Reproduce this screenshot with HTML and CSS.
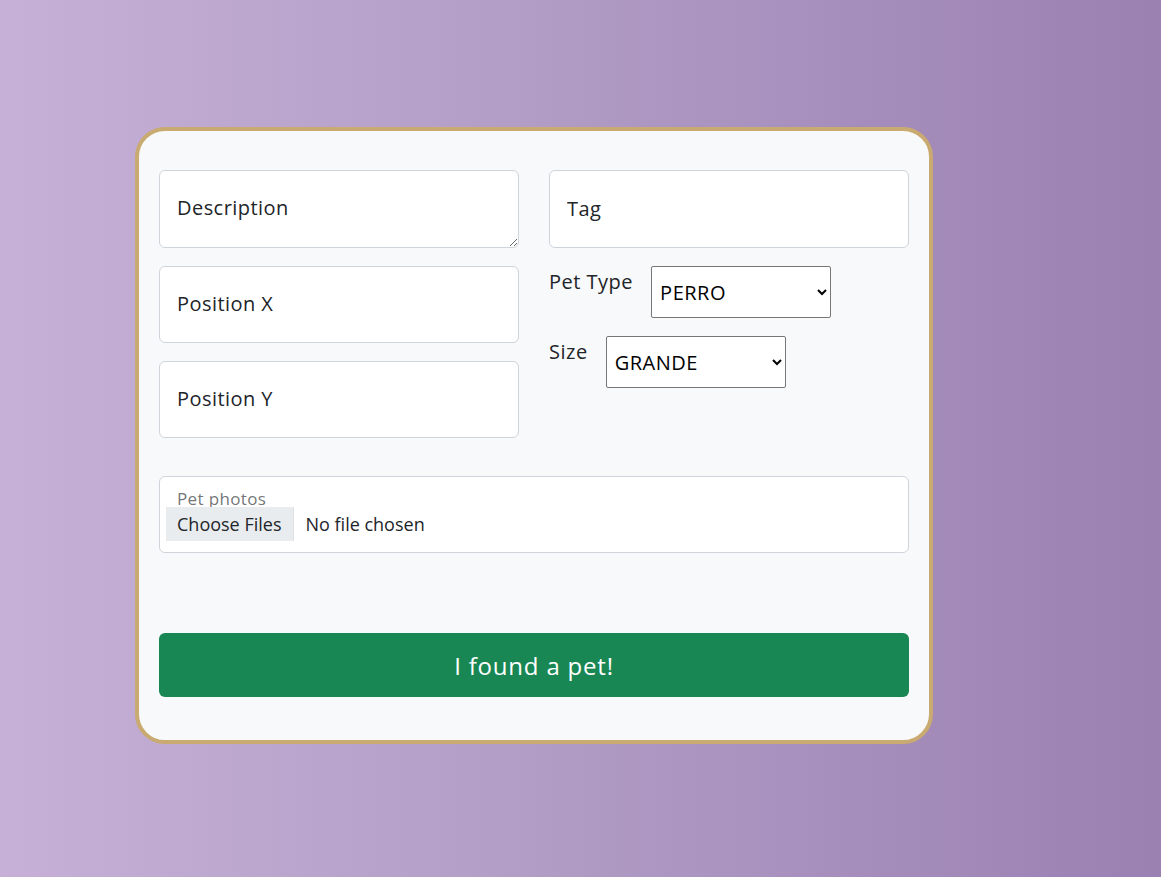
FILE: index.html
```html
<!DOCTYPE html>
<html lang="en">
<head>
<meta charset="utf-8">
<title>Found pet</title>
<link rel="stylesheet" href="styles.css">
</head>
<body>
<main class="page">
  <form class="card">
    <div class="grid">
      <div class="col">
        <textarea class="field field-area" placeholder="Description"></textarea>
        <input class="field" type="text" placeholder="Position X">
        <input class="field" type="text" placeholder="Position Y">
      </div>
      <div class="col">
        <input class="field" type="text" placeholder="Tag">
        <div class="select-row">
          <label class="select-label" for="ptype">Pet Type</label>
          <select id="ptype" class="select"><option>PERRO</option><option>GATO</option></select>
        </div>
        <div class="select-row">
          <label class="select-label" for="psize">Size</label>
          <select id="psize" class="select"><option>GRANDE</option><option>MEDIANO</option><option>PEQUEÑO</option></select>
        </div>
      </div>
    </div>
    <div class="photos">
      <label class="photos-label" for="files">Pet photos</label>
      <div class="file-row">
        <span class="file-btn">Choose Files</span>
        <span class="file-text">No file chosen</span>
      </div>
    </div>
    <button type="button" class="submit">I found a pet!</button>
  </form>
</main>
</body>
</html>
```
FILE: styles.css
```css
* { box-sizing: border-box; }
html, body { margin: 0; height: 100%; }
body {
  font-family: "Open Sans", "Noto Sans", sans-serif;
  color: #212529;
  background: linear-gradient(90deg, #c6b0d7 0%, #b19dc6 45%, #9b80b2 100%);
}
.page {
  padding: 127px 0 0 135px;
}
.card {
  width: 798px;
  border: 4px solid #c9aa71;
  border-radius: 30px;
  background: #f8f9fa;
  padding: 39px 20px 43px 20px;
}
.grid {
  display: grid;
  grid-template-columns: 360px 360px;
  column-gap: 30px;
}
.col {
  display: flex;
  flex-direction: column;
  gap: 18px;
}
.field {
  display: block;
  width: 100%;
  height: 77px;
  border: 1px solid #ced4da;
  border-radius: 6px;
  background: #fff;
  font-family: inherit;
  font-size: 20px;
  letter-spacing: 0.45px;
  line-height: 30px;
  padding: 21px 17px 23px 17px;
  color: #212529;
}
.col > .field:first-child { height: 78px; }
.field::placeholder { color: #212529; opacity: 1; }
.field-area { resize: vertical; padding-top: 22px; padding-bottom: 22px; }
.select-row {
  display: flex;
  align-items: flex-start;
  gap: 18px;
}
.select-label {
  font-size: 20px;
  letter-spacing: 0.5px;
  line-height: 30px;
  padding-top: 1px;
}
.select {
  width: 180px;
  height: 52px;
  font-family: inherit;
  font-size: 20px;
  letter-spacing: 0.5px;
  color: #000;
  background: #fff;
  border: 1px solid #767676;
  border-radius: 2px;
  padding: 0 4px;
}
.photos {
  margin-top: 38px;
  height: 77px;
  border: 1px solid #ced4da;
  border-radius: 6px;
  background: #fff;
  padding: 13px 6px 0 6px;
}
.photos-label {
  display: block;
  padding-left: 11px;
  font-size: 17px;
  letter-spacing: 0.35px;
  line-height: 17px;
  color: rgba(33, 37, 41, 0.65);
}
.file-row {
  display: flex;
  align-items: center;
  font-size: 18px;
  line-height: 24px;
}
.file-btn {
  background: #e9ecef;
  padding: 5px 12px 5px 11px;
  border-right: 1px solid #dee2e6;
}
.file-text { padding-left: 11px; }
.submit {
  display: block;
  width: 100%;
  margin-top: 80px;
  height: 64px;
  border: none;
  border-radius: 6px;
  background: #198754;
  color: #fff;
  font-family: inherit;
  font-size: 24px;
  letter-spacing: 0.8px;
}
```
